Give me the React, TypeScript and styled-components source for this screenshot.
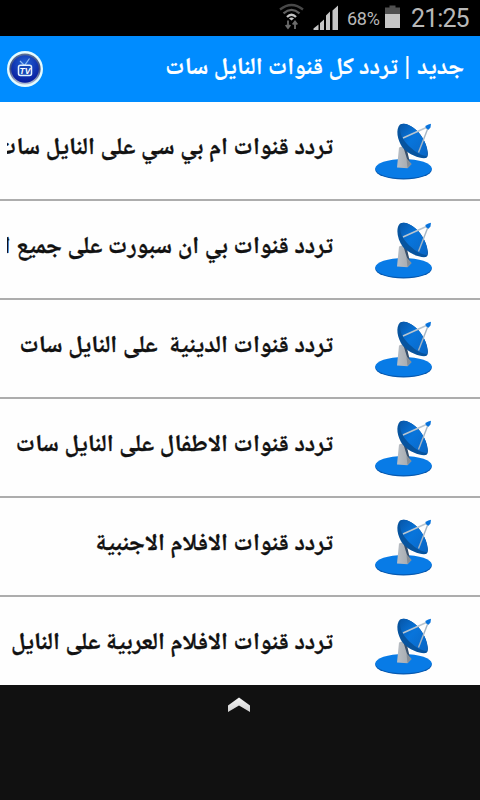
import React from "react";
import styled, { createGlobalStyle } from "styled-components";

const Global = createGlobalStyle`
  * { box-sizing: border-box; }
  body { margin: 0; background: #111; overflow: hidden; }
`;

const Screen = styled.div`
  width: 480px;
  height: 800px;
  display: flex;
  flex-direction: column;
  background: #111;
  overflow: hidden;
`;

const StatusBar = styled.div`
  flex: none;
  height: 36px;
  display: flex;
  align-items: center;
  justify-content: flex-end;
  padding-right: 11px;
  background: #000;
  color: #b8b8b8;
  font-family: Roboto, sans-serif;
`;

const StatusIcons = styled.svg`
  display: block;
  flex: none;
`;

const Percent = styled.span`
  font-size: 18px;
  line-height: 36px;
  width: 33px;
  margin: 2px 5px 0 8px;
  white-space: nowrap;
  letter-spacing: -0.3px;
`;

const Clock = styled.span`
  font-size: 25px;
  line-height: 36px;
  width: 58px;
  margin: 2px 0 0 11px;
  white-space: nowrap;
  letter-spacing: -0.9px;
`;

const Header = styled.header`
  flex: none;
  height: 66px;
  display: flex;
  align-items: center;
  justify-content: space-between;
  padding: 0 16px 0 6px;
  background: #008cff;
`;

const Title = styled.h1`
  margin: 0;
  direction: rtl;
  white-space: pre;
  color: #fff;
  font: bold 24px/40px "Noto Naskh Arabic", "Noto Sans", sans-serif;
  -webkit-text-stroke: 0.2px #fff;
`;

const Bar = styled.span`
  margin: 0 -2.5px;
`;

const List = styled.main`
  flex: none;
  height: 583px;
  overflow: hidden;
  background: #fefefe;
`;

const Row = styled.div`
  height: 99px;
  display: flex;
  direction: rtl;
  padding: 0 14px 0 7px;
  border-bottom: 2px solid #adadad;
`;

const Thumb = styled.svg`
  flex: none;
  width: 124px;
  height: 97px;
`;

const Label = styled.div`
  flex: 1;
  min-width: 0;
  margin-right: 9px;
  padding-top: 27px;
  overflow: hidden;
  white-space: pre;
  color: #111;
  font: bold 24px/40px "Noto Naskh Arabic", "Noto Sans", sans-serif;
  word-spacing: 0.4px;
  -webkit-text-stroke: 0.3px #111;
`;

const Panel = styled.footer`
  flex: 1;
  display: flex;
  justify-content: center;
  padding: 12px 2px 0 0;
  background: #111;
`;

const Logo = () => (
  <svg width="38" height="38" viewBox="0 0 38 38">
    <defs>
      <radialGradient id="ball" cx=".5" cy=".3" r=".7">
        <stop offset="0" stopColor="#2264d6" />
        <stop offset="1" stopColor="#061a9c" />
      </radialGradient>
      <linearGradient id="ring" x2="0" y2="1">
        <stop offset="0" stopColor="#5d7196" />
        <stop offset=".5" stopColor="#3a4a80" />
        <stop offset="1" stopColor="#b6c3d8" />
      </linearGradient>
    </defs>
    <circle cx="19" cy="19" r="18" fill="#e4fbff" />
    <circle cx="19" cy="19" r="15.6" fill="url(#ring)" />
    <circle cx="19" cy="19" r="13.8" fill="url(#ball)" />
    <path d="M14 11l4.5 4.5L23.5 8.5" fill="none" stroke="#8dbcf2" strokeWidth="1.2" />
    <rect x="12.5" y="15.2" width="13" height="10.3" rx="2" fill="#1747b7" stroke="#e3f2ff" strokeWidth="1.5" />
    <text x="19" y="23.6" fontFamily="Liberation Sans" fontSize="8.5" fontWeight="bold" fontStyle="italic" fill="#fff" textAnchor="middle">TV</text>
  </svg>
);

const Dish = () => (
  <Thumb viewBox="342 102 124 97">
    <defs>
      <linearGradient id="bowl" x2="1" y2="1">
        <stop offset="0" stopColor="#0756a8" />
        <stop offset=".45" stopColor="#0875dc" />
        <stop offset="1" stopColor="#0a66c4" />
      </linearGradient>
      <linearGradient id="post">
        <stop offset="0" stopColor="#b9bec4" />
        <stop offset="1" stopColor="#a2a7ac" />
      </linearGradient>
    </defs>
    <ellipse cx="403.5" cy="169.800" rx="28.3" ry="9.6" fill="#0759b0" />
    <ellipse cx="403.5" cy="168.600" rx="28.3" ry="9.6" fill="#087be6" />
    <path d="M402 146l5 4 3 13-6 2z" fill="#37506d" />
    <path d="M399 147.500l4-1.500 4 13 4.500 5-4 4.300-10.500-.8z" fill="url(#post)" />
    <path d="M406.500 159l5 5-4 4z" fill="#858d96" />
    <path d="M400 124.500C395.500 129 397 140 403 148C410 155.500 421 159 426 158Q428.500 157 427.800 152C426.500 142 420 132 413 127.500C408.500 124.500 403.500 122.500 400 124.500z" fill="#07549f" />
    <path d="M401 124.500C398.500 129 401 138 407 144C413 150.500 421 156 427 156C429 149 423.500 136 415 129C409.500 124.500 404 122.500 401 124.500z" fill="url(#bowl)" />
    <path d="M403 138L427.500 127" stroke="#b9c5cf" strokeWidth="1.6" />
    <path d="M418.500 152.500L428 128" stroke="#a7b6c4" strokeWidth="1.4" />
    <path d="M425.300 126l3-1.500 2.700-.7-.5 3.700-2 2.300-2.500-1.500z" fill="#0873dc" />
  </Thumb>
);

const channels = [
  "تردد قنوات ام بي سي على النايل سات",
  "تردد قنوات بي ان سبورت على جميع الاقمار",
  "تردد قنوات الدينية  على النايل سات",
  "تردد قنوات الاطفال على النايل سات",
  "تردد قنوات الافلام الاجنبية",
  "تردد قنوات الافلام العربية على النايل",
];

export default function App() {
  return (
    <Screen>
      <Global />
      <StatusBar>
        <StatusIcons width="60" height="36" viewBox="279 0 60 36">
          <g fill="none" strokeWidth="2.3">
            <path d="M280 9.500Q291.500 .5 303 9.500" stroke="#484848" />
            <path d="M283.500 13.300Q291.500 6.500 299.500 13.300" stroke="#606060" />
            <path d="M287 17Q291.500 12.500 296 17" stroke="#c4c4c4" />
          </g>
          <path d="M289 18.500q2.500-2 5 0l-2.500 2z" fill="#c4c4c4" />
          <path d="M288 20.500v7M285.700 25l2.300 3 2.300-3M295 29v-7M292.700 24.500l2.300-3 2.300 3" stroke="#6c6c6c" strokeWidth="1.8" fill="none" />
          <path d="M313.500 30v-1.500l5-4V30zM320 30v-7l4-3.500V30zM326 30V15.500l4-4V30zM332.500 30V10.500l5.500-5V30z" fill="#c6c6c6" />
        </StatusIcons>
        <Percent>68%</Percent>
        <StatusIcons width="15" height="36" viewBox="0 0 15 36">
          <path d="M0 7.500h4.500V5.500h6v2H15V14H0z" fill="#505050" />
          <path d="M0 14h15v14H0z" fill="#c6c6c6" />
        </StatusIcons>
        <Clock>21:25</Clock>
      </StatusBar>
      <Header>
        <Logo />
        <Title>
          جديد <Bar>|</Bar> تردد كل قنوات النايل سات
        </Title>
      </Header>
      <List>
        {channels.map((name) => (
          <Row key={name}>
            <Dish />
            <Label>{name}</Label>
          </Row>
        ))}
      </List>
      <Panel>
        <svg width="24" height="16" viewBox="0 0 24 16">
          <defs>
            <linearGradient id="chevron" x2="0" y2="1">
              <stop offset="0" stopColor="#f5f5f5" />
              <stop offset="1" stopColor="#d0d0d0" />
            </linearGradient>
          </defs>
          <path d="M1 8.500L12 .5l11 8V15l-11-6.500L1 15z" fill="url(#chevron)" />
        </svg>
      </Panel>
    </Screen>
  );
}
